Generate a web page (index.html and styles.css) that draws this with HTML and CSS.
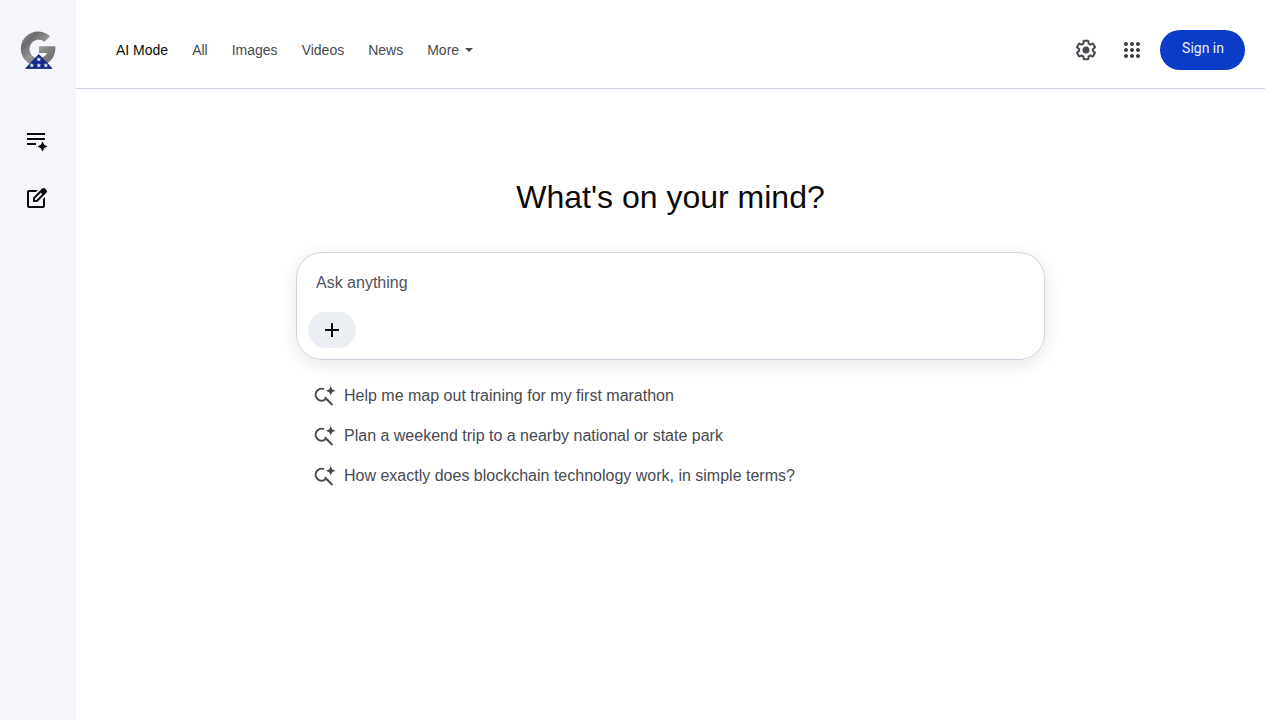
FILE: index.html
```html
<!DOCTYPE html>
<html lang="en">
<head>
    <meta charset="UTF-8">
    <meta name="viewport" content="width=device-width, initial-scale=1.0">
    <title>AI Mode</title>
    <link rel="stylesheet" href="styles.css">
</head>
<body>
    <aside class="sidebar">
        <a class="logo" href="#" aria-label="Home">
            <svg width="36" height="40" viewBox="0 0 36 40">
                <defs>
                    <linearGradient id="steel" x1="0" y1="0" x2="1" y2="1">
                        <stop offset="0" stop-color="#8c8c8c"/>
                        <stop offset="0.25" stop-color="#6c6c6c"/>
                        <stop offset="0.5" stop-color="#969696"/>
                        <stop offset="0.75" stop-color="#787878"/>
                        <stop offset="1" stop-color="#777777"/>
                    </linearGradient>
                </defs>
                <path fill="url(#steel)" d="M30 6.200A17.300 17.300 0 1 0 35.200 16.200H19v6.800h8.200a9.300 9.300 0 1 1-2.600-11.200z"/>
                <path fill="#102a94" stroke="#0b1c66" stroke-width="0.8" d="M18.800 24.500 32 38.400H5.600z"/>
                <g fill="#dfe5f5">
                    <path id="star" d="M18.800 27l.7 1.600 1.700.1-1.300 1.100.5 1.700-1.600-1-1.600 1 .5-1.700-1.300-1.100 1.700-.1z"/>
                    <use href="#star" y="6"/>
                    <use href="#star" x="-7" y="6"/>
                    <use href="#star" x="7" y="6"/>
                </g>
            </svg>
        </a>
        <button class="side-button" type="button" aria-label="History">
            <svg width="24" height="24" viewBox="0 0 24 24">
                <path d="M3 4h18v2H3zM3 9h18v2H3zM3 14h9v2H3zM18.500 12.500l1.700 3.300 3.300 1.700-3.300 1.700-1.700 3.300-1.700-3.300-3.300-1.700 3.300-1.700z"/>
            </svg>
        </button>
        <button class="side-button" type="button" aria-label="New search">
            <svg width="24" height="24" viewBox="0 0 24 24">
                <path d="M5 21q-.825 0-1.412-.587T3 19V5q0-.825.588-1.412T5 3h8.925l-2 2H5v14h14v-6.950l2-2V19q0 .825-.587 1.412T19 21zM9 15v-4.250l9.175-9.175q.3-.3.675-.45t.75-.15q.4 0 .763.150t.662.450L22.425 3q.275.300.425.663T23 4.400t-.137.738-.438.662L13.250 15zm2-2h1.400l5.800-5.800-1.400-1.400-5.800 5.775z"/>
            </svg>
        </button>
    </aside>

    <div class="page">
        <header class="topbar">
            <nav class="tabs">
                <a class="active" href="#">AI Mode</a>
                <a href="#">All</a>
                <a href="#">Images</a>
                <a href="#">Videos</a>
                <a href="#">News</a>
                <button class="more" type="button">More <span class="caret"></span></button>
            </nav>
            <div class="actions">
                <button class="icon-button" type="button" aria-label="Settings">
                    <svg width="24" height="24" viewBox="0 0 24 24">
                        <path d="M13.850 22.250h-3.700c-.74 0-1.360-.54-1.450-1.270l-.27-1.890c-.27-.14-.53-.29-.79-.46l-1.800.72c-.7.260-1.470-.03-1.810-.65L2.200 15.530c-.35-.66-.2-1.440.36-1.880l1.530-1.190c-.01-.15-.02-.3-.02-.46 0-.15.010-.31.020-.46l-1.520-1.190c-.59-.45-.74-1.260-.37-1.880l1.850-3.190c.34-.62 1.110-.9 1.790-.63l1.810.73c.26-.17.520-.32.780-.46l.27-1.910c.09-.7.710-1.250 1.440-1.250h3.700c.74 0 1.360.54 1.450 1.270l.27 1.890c.27.140.53.290.79.460l1.800-.72c.71-.26 1.480.03 1.820.650l1.840 3.180c.36.660.2 1.440-.36 1.880l-1.520 1.190c.01.150.02.300.02.460s-.01.310-.02.460l1.520 1.190c.56.450.72 1.230.370 1.860l-1.860 3.220c-.34.620-1.110.900-1.800.630l-1.800-.72c-.26.170-.52.320-.78.460l-.27 1.910c-.1.680-.72 1.220-1.460 1.220zm-3.230-2h2.760l.37-2.550.53-.22c.44-.18.880-.44 1.340-.78l.45-.34 2.380.960 1.380-2.400-2.030-1.580.07-.56c.030-.26.060-.51.060-.78s-.03-.53-.06-.78l-.07-.56 2.030-1.580-1.390-2.400-2.390.96-.45-.35c-.42-.32-.87-.58-1.330-.77l-.52-.22-.37-2.550h-2.760l-.37 2.550-.53.210c-.44.190-.88.440-1.340.790l-.45.330-2.380-.95-1.390 2.390 2.030 1.580-.07.560a7 7 0 0 0-.06.790c0 .26.020.53.060.78l.07.560-2.030 1.580 1.380 2.400 2.390-.96.450.35c.43.330.86.580 1.330.77l.53.220z"/>
                        <circle cx="12" cy="12" r="3.500"/>
                    </svg>
                </button>
                <button class="icon-button apps" type="button" aria-label="Apps">
                    <svg width="24" height="24" viewBox="0 0 24 24">
                        <path d="M6 8c1.100 0 2-.9 2-2s-.9-2-2-2-2 .9-2 2 .9 2 2 2m6 12c1.100 0 2-.9 2-2s-.9-2-2-2-2 .9-2 2 .9 2 2 2m-6 0c1.100 0 2-.9 2-2s-.9-2-2-2-2 .9-2 2 .9 2 2 2m0-6c1.100 0 2-.9 2-2s-.9-2-2-2-2 .9-2 2 .9 2 2 2m6 0c1.100 0 2-.9 2-2s-.9-2-2-2-2 .9-2 2 .9 2 2 2m4-8c0 1.100.9 2 2 2s2-.9 2-2-.9-2-2-2-2 .9-2 2m-4 2c1.100 0 2-.9 2-2s-.9-2-2-2-2 .9-2 2 .9 2 2 2m6 6c1.100 0 2-.9 2-2s-.9-2-2-2-2 .9-2 2 .9 2 2 2m0 6c1.100 0 2-.9 2-2s-.9-2-2-2-2 .9-2 2 .9 2 2 2"/>
                    </svg>
                </button>
                <a class="sign-in" href="#">Sign in</a>
            </div>
        </header>

        <main class="content">
            <h1>What's on your mind?</h1>
            <form class="ask-box">
                <input type="text" placeholder="Ask anything" aria-label="Ask anything">
                <button class="add" type="button" aria-label="Add">
                    <svg width="24" height="24" viewBox="0 0 24 24">
                        <path d="M11 5h2v6h6v2h-6v6h-2v-6H5v-2h6z"/>
                    </svg>
                </button>
            </form>
            <ul class="suggestions">
                <li><a href="#">
                    <svg width="24" height="24" viewBox="0 0 24 24">
                        <g id="search-spark">
                            <path d="M12 5.200A6 6 0 1 0 13.600 15.200M12.800 13.200l7.600 7.800" fill="none" stroke="currentColor" stroke-width="2"/>
                            <path d="M18.700 2l1.500 3.200 3.200 1.500-3.200 1.500-1.500 3.200-1.500-3.200L14 6.700l3.200-1.500z"/>
                        </g>
                    </svg>
                    Help me map out training for my first marathon
                </a></li>
                <li><a href="#">
                    <svg width="24" height="24" viewBox="0 0 24 24"><use href="#search-spark"/></svg>
                    Plan a weekend trip to a nearby national or state park
                </a></li>
                <li><a href="#">
                    <svg width="24" height="24" viewBox="0 0 24 24"><use href="#search-spark"/></svg>
                    How exactly does blockchain technology work, in simple terms?
                </a></li>
            </ul>
        </main>
    </div>
</body>
</html>
```
FILE: styles.css
```css
* {
    box-sizing: border-box;
}

body {
    display: flex;
    min-height: 100vh;
    margin: 0;
    padding-right: 15px;
    background: #fff;
    color: #0a0a0a;
    font-family: "Liberation Sans", Arial, sans-serif;
}

a {
    color: inherit;
    text-decoration: none;
}

button {
    padding: 0;
    border: none;
    background: none;
    color: inherit;
    font: inherit;
    cursor: pointer;
}

svg {
    display: block;
    fill: currentColor;
}

/* left rail */
.sidebar {
    display: flex;
    flex-direction: column;
    align-items: center;
    flex: none;
    width: 76px;
    padding-top: 30px;
    background: #f4f6fb;
}

.logo {
    margin-bottom: 51px;
}

.side-button {
    display: flex;
    align-items: center;
    justify-content: center;
    width: 40px;
    height: 40px;
    margin: 0 4px 18px 0;
}

.page {
    flex: 1;
    min-width: 0;
}

/* top bar */
.topbar {
    display: flex;
    align-items: center;
    justify-content: space-between;
    padding: 30px 20px 18px 40px;
    border-bottom: 1px solid #d2d2e4;
}

.tabs {
    display: flex;
    align-items: center;
    gap: 24px;
    color: #474a50;
    font-size: 14px;
    line-height: 20px;
}

.tabs .active {
    color: #0a0a0a;
}

.more {
    display: flex;
    align-items: center;
    gap: 6px;
}

.caret {
    border: 4px solid transparent;
    border-top-color: currentColor;
    border-bottom: none;
}

.actions {
    display: flex;
    align-items: center;
    color: #474a50;
}

.icon-button {
    display: flex;
    align-items: center;
    justify-content: center;
    width: 40px;
    height: 40px;
}

.apps {
    margin: 0 8px 0 6px;
    color: #3c3d40;
}

.sign-in {
    height: 40px;
    padding: 0 21px 0 22px;
    border-radius: 20px;
    background: #0b3cc8;
    color: #e8effc;
    font-family: Roboto, sans-serif;
    font-size: 14px;
    line-height: 36px;
}

/* prompt area */
.content {
    max-width: 749px;
    margin: 0 auto;
    padding-top: 88px;
}

h1 {
    margin: 0 0 35px;
    font-size: 32px;
    font-weight: 400;
    line-height: 40px;
    text-align: center;
}

.ask-box {
    display: flex;
    flex-direction: column;
    align-items: flex-start;
    gap: 17px;
    padding: 18px 11px 11px;
    border: 1px solid #d2d2e0;
    border-radius: 26px;
    box-shadow: 0 4px 20px rgba(0, 0, 0, 0.1);
}

.ask-box input {
    width: 100%;
    height: 24px;
    padding: 0 8px;
    border: none;
    outline: none;
    background: none;
    font: inherit;
    font-size: 16px;
}

.ask-box input::placeholder {
    color: #50535a;
    opacity: 1;
}

.add {
    display: flex;
    align-items: center;
    justify-content: center;
    width: 48px;
    height: 36px;
    border-radius: 18px;
    background: #ebeef2;
}

.suggestions {
    margin: 16px 0 0;
    padding: 0 16px;
    list-style: none;
}

.suggestions a {
    display: flex;
    align-items: center;
    gap: 8px;
    height: 40px;
    color: #474a50;
    font-size: 16px;
}
```
